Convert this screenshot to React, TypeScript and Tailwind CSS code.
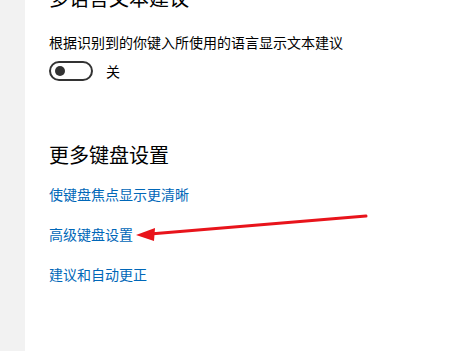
import React from 'react';

const links = ['使键盘焦点显示更清晰', '高级键盘设置', '建议和自动更正'];

const Toggle: React.FC = () => (
  <div className="flex items-center gap-[13px]">
    <div className="w-[44px] h-[20px] rounded-full border-2 border-[#333] flex items-center pl-[4px]">
      <div className="w-[10px] h-[10px] rounded-full bg-[#333]" />
    </div>
    <span className="text-[14px] leading-[14px] text-black">关</span>
  </div>
);

export default function App() {
  return (
    <div
      className="relative flex w-[471px] h-[351px] overflow-hidden bg-white"
      style={{ fontFamily: '"Noto Sans CJK SC", "Noto Sans", sans-serif' }}
    >
      <div className="w-[25px] h-full bg-[#f2f2f2] shrink-0" />
      <div className="flex flex-col pl-[24px]">
        <h2 className="mt-[-12px] text-[20px] leading-[20px] text-black font-normal">多语言文本建议</h2>
        <p className="mt-[27px] text-[14px] leading-[14px] text-black">根据识别到的你键入所使用的语言显示文本建议</p>
        <div className="mt-[12px]">
          <Toggle />
        </div>
        <h2 className="mt-[64px] text-[20px] leading-[20px] text-black font-normal">更多键盘设置</h2>
        <div className="mt-[22px] flex flex-col gap-[26px]">
          {links.map((l) => (
            <a key={l} className="text-[14px] leading-[14px] text-[#0067b8]">
              {l}
            </a>
          ))}
        </div>
      </div>
      {/* annotation arrow */}
      <svg className="absolute left-0 top-0 pointer-events-none" width="471" height="351">
        <line x1="366" y1="216" x2="150" y2="234" stroke="#e8141b" strokeWidth="3" strokeLinecap="round" />
        <polygon points="136,235 155,228 154,241" fill="#e8141b" />
      </svg>
    </div>
  );
}
